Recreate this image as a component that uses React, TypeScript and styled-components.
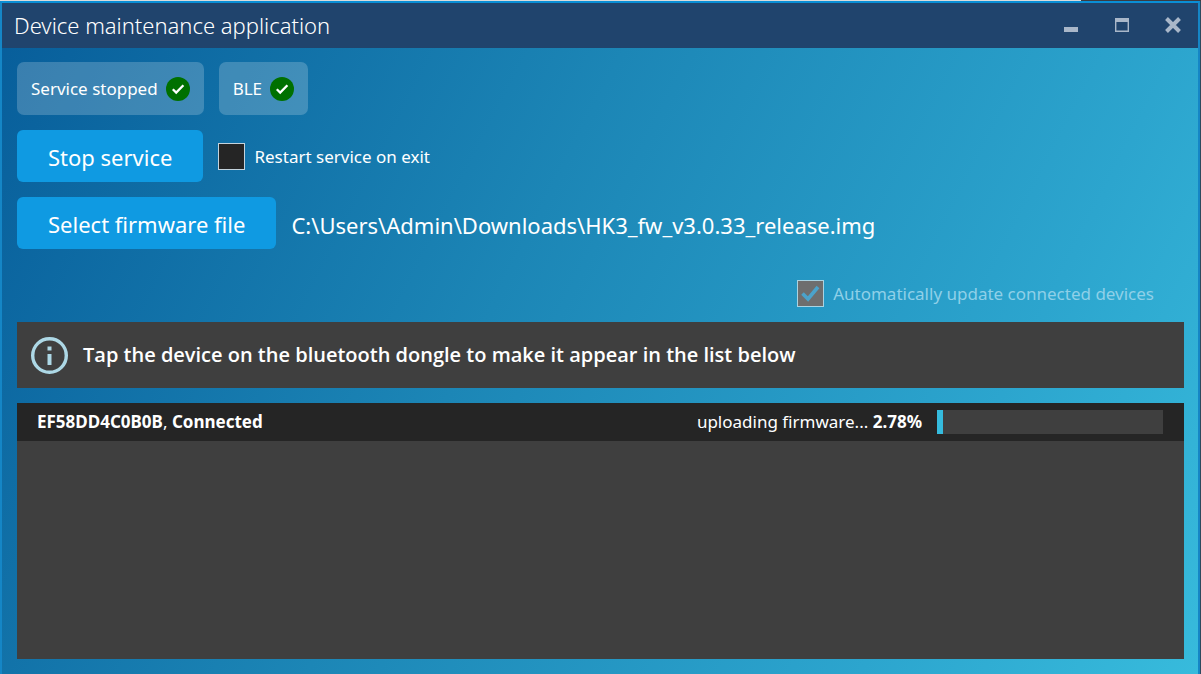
import React, { useState } from "react";
import styled, { createGlobalStyle } from "styled-components";

const GlobalStyle = createGlobalStyle`
  *, *::before, *::after { box-sizing: border-box; }
  body {
    margin: 0;
    font-family: "Noto Sans", "Open Sans", sans-serif;
    color: #fff;
    background: #2c3e4c;
  }
  button, input { font: inherit; color: inherit; }
`;

const Desktop = styled.div`
  display: flex;
  min-height: 100vh;
  padding: 1px 1px 0 0;
  background: linear-gradient(to right, #dcdcdc 90%, #3c3c40 90%) top / 100% 1px no-repeat #2c4a5e;
`;

const AppWindow = styled.div`
  flex: 1;
  display: flex;
  flex-direction: column;
  min-width: 0;
  border: 2px solid #1586c6;
  border-top-color: #0a8fd6;
  border-bottom: 0;
  background: linear-gradient(117deg, #075d9a 0%, #1c86b6 42%, #2ca5ce 78%, #37bbdc 100%);
`;

const TitleBar = styled.header`
  display: flex;
  align-items: center;
  justify-content: space-between;
  height: 45px;
  padding: 0 7px 2px 12px;
  background: #20446d;
`;

const Title = styled.h1`
  margin: 0;
  font-size: 22px;
  font-weight: 300;
  line-height: 32px;
`;

const WindowControls = styled.div`
  display: flex;
  gap: 15px;
`;

const WindowButton = styled.button`
  display: flex;
  width: 36px;
  height: 36px;
  padding: 0;
  border: 0;
  align-items: center;
  justify-content: center;
  background: transparent;
  color: #a9b7c9;
`;

const Content = styled.main`
  flex: 1;
  display: flex;
  flex-direction: column;
  gap: 15px;
  padding: 14px 14px 15px 15px;
`;

const Row = styled.div<{ $end?: boolean }>`
  display: flex;
  align-items: center;
  gap: 15px;
  ${(p) => p.$end && "justify-content: flex-end; padding: 16px 30px 0 0;"}
`;

const StatusChip = styled.div`
  display: flex;
  align-items: center;
  gap: 8px;
  height: 53px;
  padding: 0 14px;
  border-radius: 7px;
  background: rgba(255, 255, 255, 0.2);
  font-size: 17px;
  line-height: 24px;
`;

const ActionButton = styled.button`
  height: 52px;
  padding: 2px 31px 0;
  border: 0;
  border-radius: 6px;
  background: #0f9ae2;
  font-size: 22px;
  line-height: 32px;
`;

const CheckLabel = styled.label<{ $disabled?: boolean }>`
  display: flex;
  align-items: center;
  gap: 9px;
  font-size: 17px;
  line-height: 27px;
  color: ${(p) => (p.$disabled ? "#8fd0e8" : "#fff")};
`;

const CheckBoxFrame = styled.span`
  display: grid;
  width: 27px;
  height: 27px;

  & > * { grid-area: 1 / 1; }
  & > svg { place-self: center; pointer-events: none; }
`;

const CheckInput = styled.input`
  appearance: none;
  width: 27px;
  height: 27px;
  margin: 0;
  border: 1px solid #c4d3dd;
  background: #252525;

  &:disabled {
    border-color: #a9d3e2;
    background: #6e6e6e;
  }
`;

const FilePath = styled.span`
  padding-top: 4px;
  font-size: 22px;
  line-height: 32px;
`;

const InfoBanner = styled.section`
  display: flex;
  align-items: center;
  gap: 15px;
  height: 66px;
  padding: 0 14px;
  background: #3f3f3f;
  font-family: "Open Sans", "Noto Sans", sans-serif;
  font-size: 20px;
  font-weight: 600;
  line-height: 28px;
`;

const DeviceList = styled.ul`
  flex: 1;
  margin: 0;
  padding: 0;
  list-style: none;
  background: #3f3f3f;
`;

const DeviceRow = styled.li`
  display: flex;
  align-items: center;
  justify-content: space-between;
  height: 38px;
  padding: 0 21px 0 20px;
  background: #252525;
  font-size: 17px;
  line-height: 24px;
`;

const Upload = styled.div`
  display: flex;
  align-items: center;
  gap: 15px;
`;

const ProgressTrack = styled.div`
  width: 226px;
  height: 24px;
  background: #3f3f3f;
`;

const ProgressFill = styled.div`
  height: 100%;
  background: #35bbdd;
`;

const OkIcon = () => (
  <svg width="24" height="24" viewBox="0 0 24 24" aria-hidden="true">
    <circle cx="12" cy="12" r="12" fill="#007000" />
    <path d="M6.8 12.2 10.2 15.6 17.4 8.2" fill="none" stroke="#fff" strokeWidth="2.3" />
  </svg>
);

const InfoIcon = () => (
  <svg width="37" height="37" viewBox="0 0 37 37" aria-hidden="true">
    <circle cx="18.5" cy="18.5" r="16.8" fill="none" stroke="#add8e6" strokeWidth="3.4" />
    <path d="M16.5 9.5h4v4h-4zM16.5 17h4v11h-4z" fill="#add8e6" />
  </svg>
);

const TickIcon = () => (
  <svg width="19" height="17" viewBox="0 0 19 17" aria-hidden="true">
    <path d="M1.5 8.5 7 14 17 2" fill="none" stroke="#4ba3cb" strokeWidth="3.6" />
  </svg>
);

const Status = ({ label }: { label: string }) => (
  <StatusChip>
    <span>{label}</span>
    <OkIcon />
  </StatusChip>
);

const devices = [{ id: "EF58DD4C0B0B", state: "Connected", task: "uploading firmware...", progress: 2.78 }];

export default function App() {
  const [restart, setRestart] = useState(false);

  return (
    <>
      <GlobalStyle />
      <Desktop>
        <AppWindow>
          <TitleBar>
            <Title>Device maintenance application</Title>
            <WindowControls>
              <WindowButton aria-label="Minimize">
                <svg width="14" height="14" viewBox="0 0 14 14">
                  <path d="M0 9h14v5H0z" fill="currentColor" />
                </svg>
              </WindowButton>
              <WindowButton aria-label="Maximize">
                <svg width="14" height="14" viewBox="0 0 14 14">
                  <path d="M0 0h14v14H0zM1.4 4v8.6h11.2V4z" fill="currentColor" fillRule="evenodd" />
                </svg>
              </WindowButton>
              <WindowButton aria-label="Close">
                <svg width="16" height="16" viewBox="0 0 16 16">
                  <path d="M1.5 1.5 14.5 14.5M14.5 1.5 1.5 14.5" stroke="currentColor" strokeWidth="4" />
                </svg>
              </WindowButton>
            </WindowControls>
          </TitleBar>
          <Content>
            <Row>
              <Status label="Service stopped" />
              <Status label="BLE" />
            </Row>
            <Row>
              <ActionButton>Stop service</ActionButton>
              <CheckLabel>
                <CheckBoxFrame>
                  <CheckInput type="checkbox" checked={restart} onChange={(e) => setRestart(e.target.checked)} />
                  {restart && <TickIcon />}
                </CheckBoxFrame>
                Restart service on exit
              </CheckLabel>
            </Row>
            <Row>
              <ActionButton>Select firmware file</ActionButton>
              <FilePath>C:\Users\Admin\Downloads\HK3_fw_v3.0.33_release.img</FilePath>
            </Row>
            <Row $end>
              <CheckLabel $disabled>
                <CheckBoxFrame>
                  <CheckInput type="checkbox" checked disabled readOnly />
                  <TickIcon />
                </CheckBoxFrame>
                Automatically update connected devices
              </CheckLabel>
            </Row>
            <InfoBanner>
              <InfoIcon />
              <span>Tap the device on the bluetooth dongle to make it appear in the list below</span>
            </InfoBanner>
            <DeviceList>
              {devices.map((d) => (
                <DeviceRow key={d.id}>
                  <span>
                    <b>{d.id}</b>, <b>{d.state}</b>
                  </span>
                  <Upload>
                    <span>
                      {d.task} <b>{d.progress}%</b>
                    </span>
                    <ProgressTrack role="progressbar" aria-label="Firmware upload" aria-valuenow={d.progress}>
                      <ProgressFill style={{ width: `${d.progress}%` }} />
                    </ProgressTrack>
                  </Upload>
                </DeviceRow>
              ))}
            </DeviceList>
          </Content>
        </AppWindow>
      </Desktop>
    </>
  );
}
